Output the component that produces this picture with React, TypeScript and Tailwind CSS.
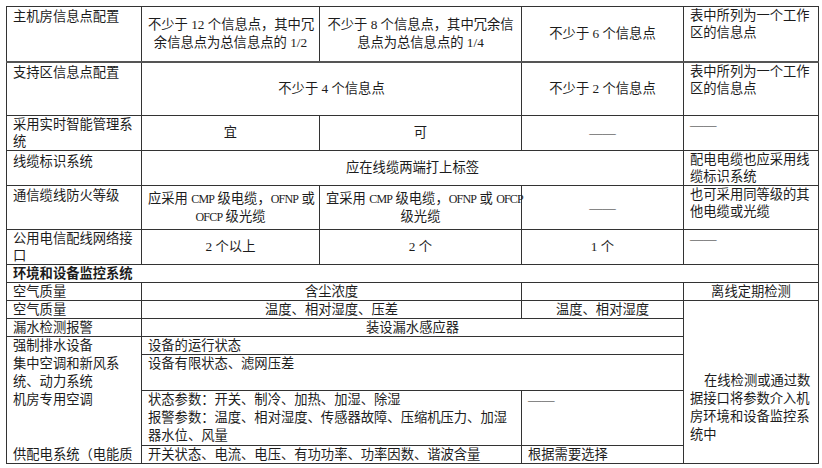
const cell = "border border-[#333] px-[6px] py-0 align-top text-left whitespace-nowrap";
const center = "border border-[#333] px-[6px] py-0 align-middle text-center whitespace-nowrap";
const dash = <span className="font-['Liberation_Serif']">——</span>;

// narrow latin words inside the CJK lines
const L = ({ children }: { children: string }) => (
  <span className="text-[12px] tracking-[-0.8px]">{children}</span>
);

export default function App() {
  return (
    <div
      className="w-[822px] h-[468px] bg-white pl-[6px] pt-[6px] text-[13.3px] leading-[18px] text-[#1c1c1c]"
      style={{ fontFamily: '"Liberation Serif", "Noto Sans CJK SC", serif' }}
    >
      <table className="border-collapse table-fixed w-[812px] border-[1.5px] border-black">
        <colgroup>
          <col className="w-[135px]" />
          <col className="w-[178px]" />
          <col className="w-[202px]" />
          <col className="w-[162px]" />
          <col className="w-[135px]" />
        </colgroup>
        <tbody>
          <tr className="h-[55px]">
            <td className={`${cell} pt-[1px]`}>主机房信息点配置</td>
            <td className={center}>
              不少于 12 个信息点，其中冗
              <br />
              余信息点为总信息点的 1/2
            </td>
            <td className={center}>
              不少于 8 个信息点，其中冗余信
              <br />
              息点为总信息点的 1/4
            </td>
            <td className={center}>不少于 6 个信息点</td>
            <td className={`${cell} leading-[17px]`}>
              表中所列为一个工作
              <br />
              区的信息点
            </td>
          </tr>
          <tr className="h-[54px]">
            <td className={`${cell} pt-[1px] border-t-2 border-t-[#555]`}>支持区信息点配置</td>
            <td colSpan={2} className={`${center} border-t-2 border-t-[#555]`}>
              不少于 4 个信息点
            </td>
            <td className={`${center} border-t-2 border-t-[#555]`}>不少于 2 个信息点</td>
            <td className={`${cell} leading-[17px] border-t-2 border-t-[#555]`}>
              表中所列为一个工作
              <br />
              区的信息点
            </td>
          </tr>
          <tr className="h-[35px]">
            <td className={`${cell} leading-[17px]`}>
              采用实时智能管理系
              <br />
              统
            </td>
            <td className={center}>宜</td>
            <td className={center}>可</td>
            <td className={center}>{dash}</td>
            <td className={`${cell} text-center`}>{dash}</td>
          </tr>
          <tr className="h-[35px]">
            <td className={`${cell} pt-[2px]`}>线缆标识系统</td>
            <td colSpan={3} className={center}>
              应在线缆两端打上标签
            </td>
            <td className={`${cell} leading-[17px]`}>
              配电电缆也应采用线
              <br />
              缆标识系统
            </td>
          </tr>
          <tr className="h-[44px]">
            <td className={`${cell} pt-[1px]`}>通信缆线防火等级</td>
            <td className={center}>
              应采用 <L>CMP</L> 级电缆，<L>OFNP</L> 或
              <br />
              <L>OFCP</L> 级光缆
            </td>
            <td className={center}>
              宜采用 <L>CMP</L> 级电缆，<L>OFNP</L> 或 <L>OFCP</L>
              <br />
              级光缆
            </td>
            <td className={center}>{dash}</td>
            <td className={`${cell} leading-[17px]`}>
              也可采用同等级的其
              <br />
              他电缆或光缆
            </td>
          </tr>
          <tr className="h-[35px]">
            <td className={`${cell} leading-[17px]`}>
              公用电信配线网络接
              <br />口
            </td>
            <td className={center}>2 个以上</td>
            <td className={center}>2 个</td>
            <td className={center}>1 个</td>
            <td className={`${cell} text-center`}>{dash}</td>
          </tr>
          <tr className="h-[18px] leading-[17px]">
            <td colSpan={5} className={`${cell} font-bold`}>
              环境和设备监控系统
            </td>
          </tr>
          <tr className="h-[18px] leading-[17px]">
            <td className={cell}>空气质量</td>
            <td colSpan={2} className={center}>
              含尘浓度
            </td>
            <td className={center}></td>
            <td className={center}>离线定期检测</td>
          </tr>
          <tr className="h-[18px] leading-[17px]">
            <td className={cell}>空气质量</td>
            <td colSpan={2} className={center}>
              温度、相对湿度、压差
            </td>
            <td className={center}>温度、相对湿度</td>
            <td rowSpan={6} className={`${cell} leading-[18px] pt-[71px]`}>
              <span className="pl-[14px]">在线检测或通过数</span>
              <br />
              据接口将参数介入机
              <br />
              房环境和设备监控系
              <br />
              统中
            </td>
          </tr>
          <tr className="h-[18px] leading-[17px]">
            <td className={cell}>漏水检测报警</td>
            <td colSpan={3} className={center}>
              装设漏水感应器
            </td>
          </tr>
          <tr className="h-[18px] leading-[17px]">
            <td className={`${cell} border-b-0`}>强制排水设备</td>
            <td colSpan={3} className={cell}>
              设备的运行状态
            </td>
          </tr>
          <tr className="h-[36px] leading-[18px]">
            <td className={`${cell} border-y-0`}>
              集中空调和新风系
              <br />
              统、动力系统
            </td>
            <td colSpan={3} className={cell}>
              设备有限状态、滤网压差
            </td>
          </tr>
          <tr className="h-[55px] leading-[18px]">
            <td className={`${cell} border-y-0`}>机房专用空调</td>
            <td colSpan={2} className={cell}>
              状态参数：开关、制冷、加热、加湿、除湿
              <br />
              报警参数：温度、相对湿度、传感器故障、压缩机压力、加湿
              <br />
              器水位、风量
            </td>
            <td className={`${cell} text-center`}>{dash}</td>
          </tr>
          <tr className="h-[18px] leading-[17px]">
            <td className={`${cell} border-t-0`}>供配电系统（电能质</td>
            <td colSpan={2} className={cell}>
              开关状态、电流、电压、有功功率、功率因数、谐波含量
            </td>
            <td className={cell}>根据需要选择</td>
          </tr>
        </tbody>
      </table>
    </div>
  );
}
